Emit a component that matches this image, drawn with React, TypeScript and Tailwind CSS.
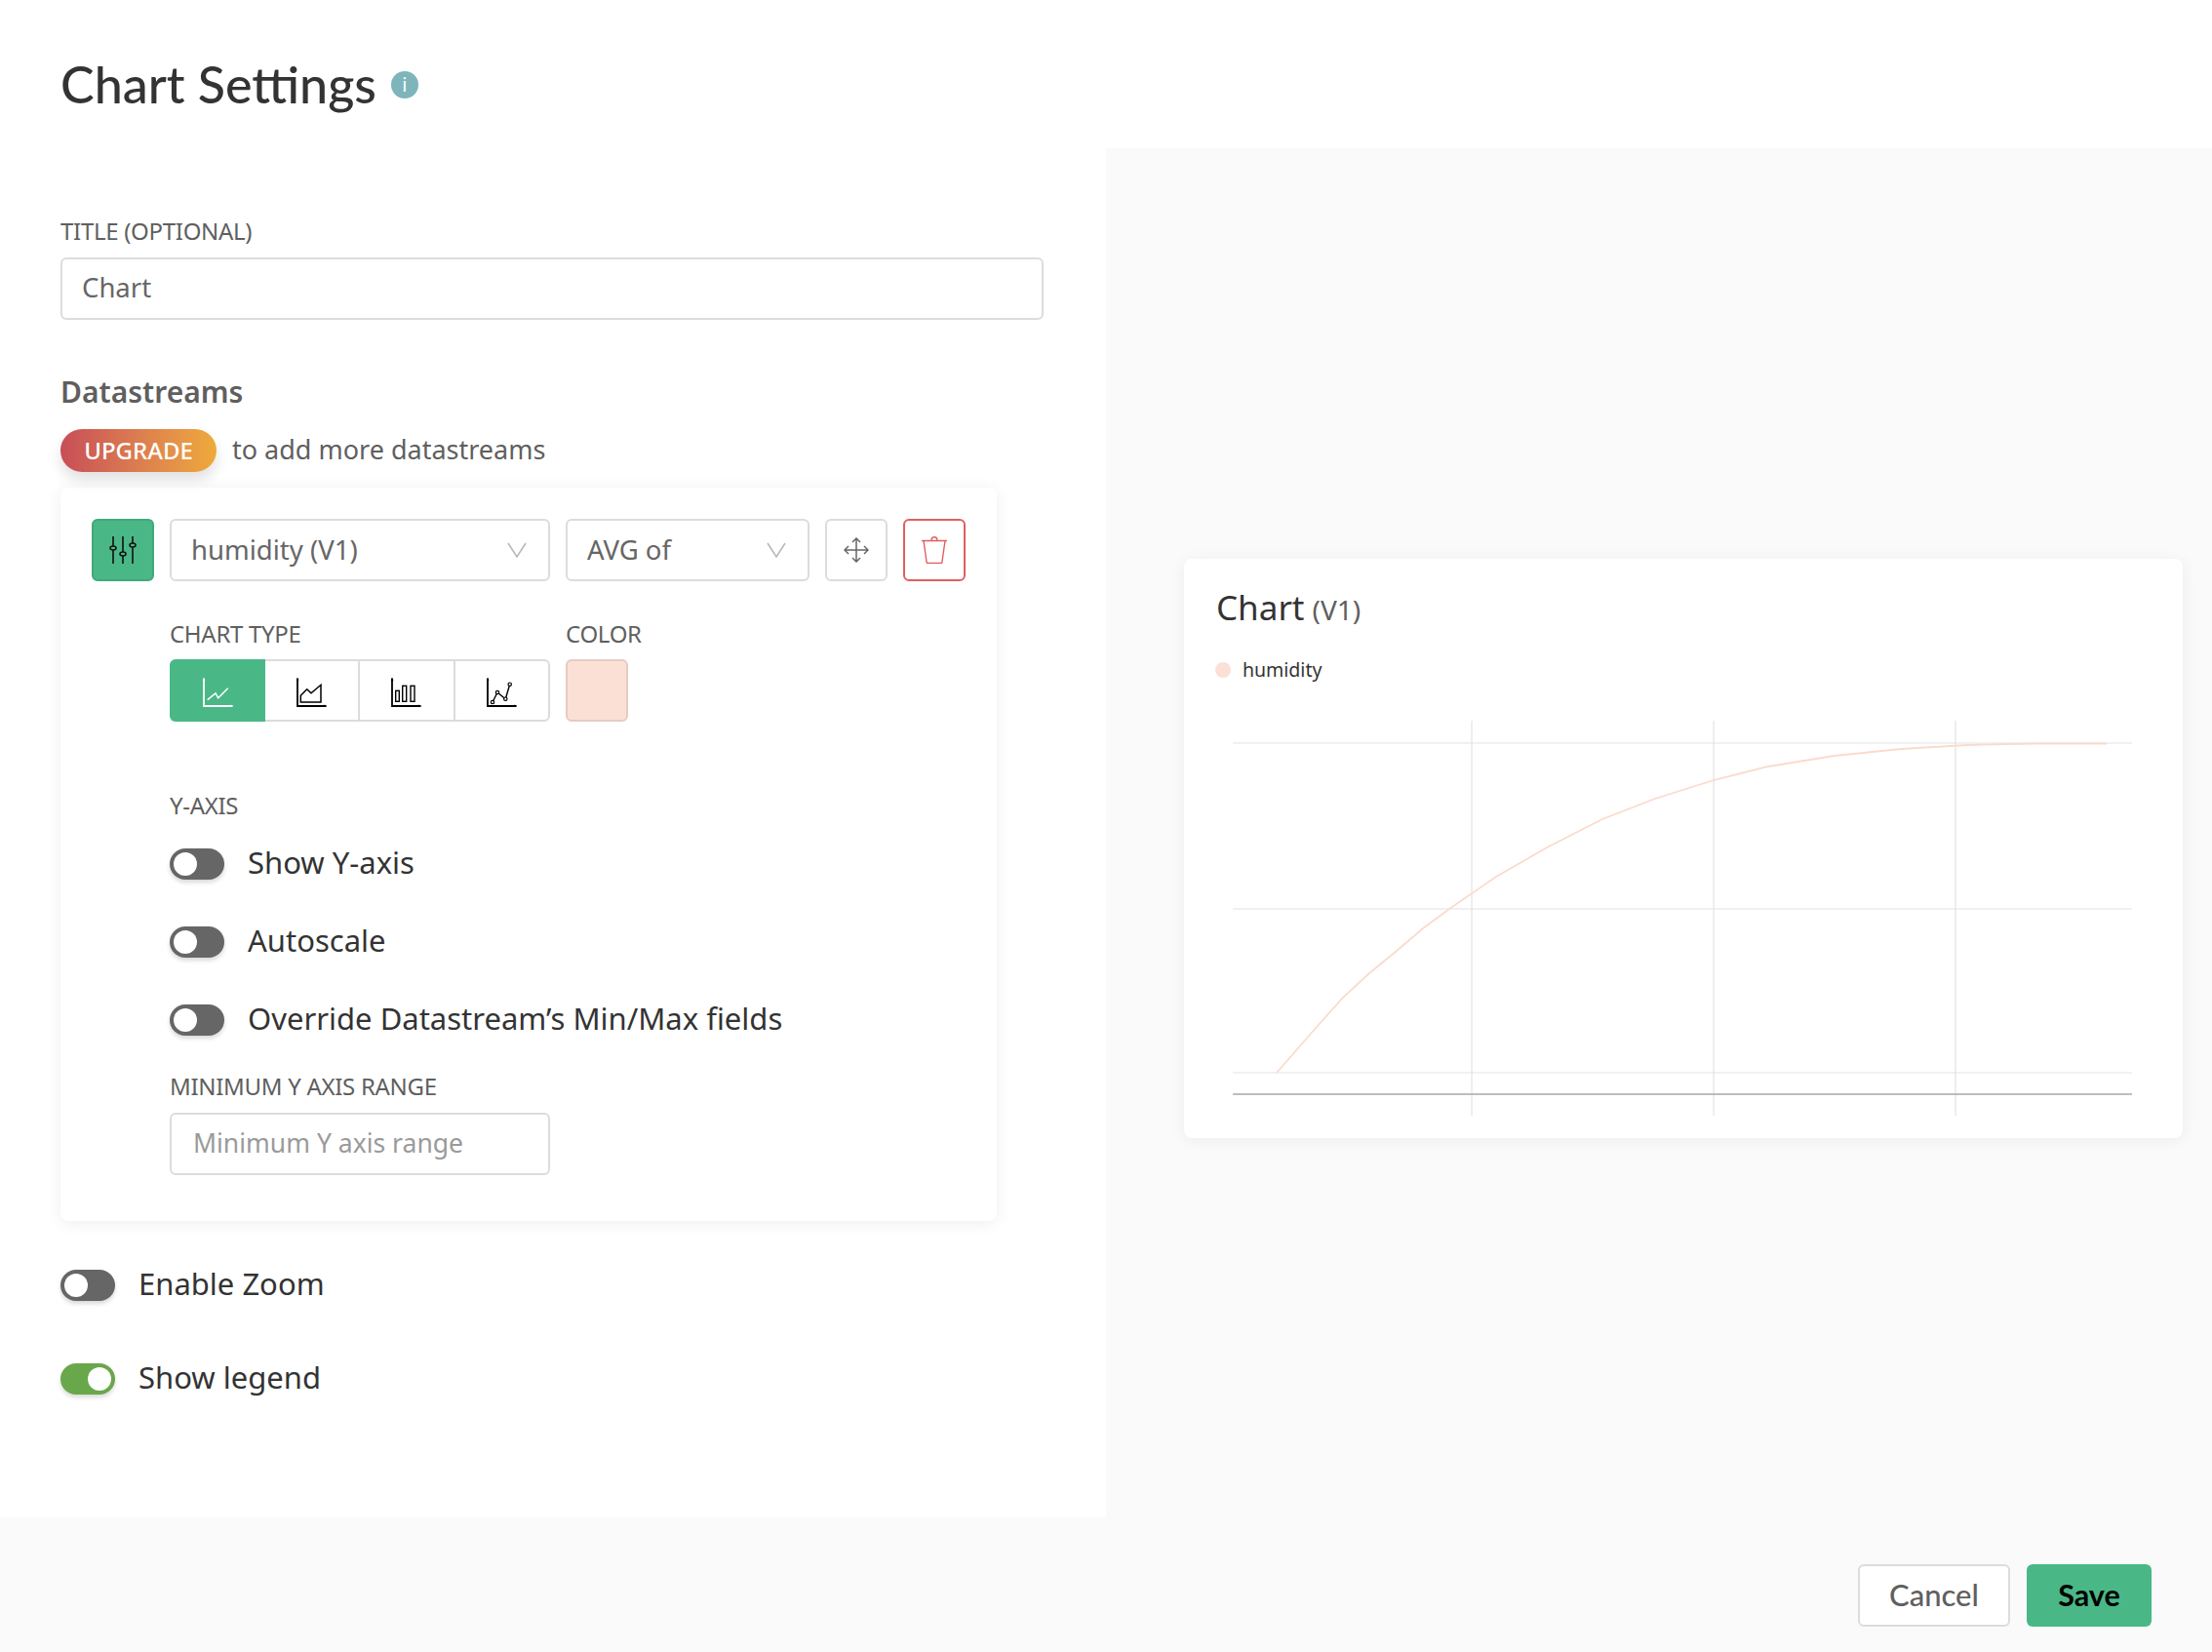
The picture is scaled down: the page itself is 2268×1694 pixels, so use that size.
const UI_FONT = "font-['Noto_Sans',sans-serif]";

function Toggle({ on = false }: { on?: boolean }) {
  return (
    <div className={`flex h-[32px] w-[56px] shrink-0 items-center rounded-full px-[4px] shadow-[0_3px_4px_rgba(0,0,0,0.15)] ${on ? "justify-end bg-[#69a74b]" : "justify-start bg-[#666666]"}`}>
      <div className="h-[24px] w-[24px] rounded-full bg-white" />
    </div>
  );
}

function ToggleRow({ label, on = false, className = "" }: { label: string; on?: boolean; className?: string }) {
  return (
    <div className={`flex h-[32px] items-center gap-[24px] ${className}`}>
      <Toggle on={on} />
      <span className="pb-[3px] text-[31px] leading-none text-[#333333]">{label}</span>
    </div>
  );
}

function Label({ children, className = "" }: { children: string; className?: string }) {
  return <div className={`pt-[1px] pb-[1px] text-[24px] leading-[28px] tracking-[-0.3px] text-[#5f5f5f] ${className}`}>{children}</div>;
}

function Chevron() {
  return (
    <svg width="20" height="16" viewBox="0 0 20 16" fill="none" stroke="#b9b9b9" strokeWidth="1.6">
      <path d="M1 1l9 14 9-14" />
    </svg>
  );
}

function Select({ text, className }: { text: string; className: string }) {
  return (
    <div className={`flex h-[64px] items-center justify-between rounded-[6px] border-2 border-[#dcdcdc] bg-white pl-[20px] pr-[22px] ${className}`}>
      <span className="pb-[1px] text-[27.5px] leading-none text-[#666666]">{text}</span>
      <Chevron />
    </div>
  );
}

function SlidersIcon() {
  return (
    <svg width="28" height="28" viewBox="0 0 28 28" fill="none" stroke="#111" strokeWidth="1.6">
      <path d="M4 0v10M4 14v14M14 0v16M14 20v8M24 0v7M24 11v17" />
      <ellipse cx="4" cy="12" rx="3" ry="2" />
      <ellipse cx="14" cy="18" rx="3" ry="2" />
      <ellipse cx="24" cy="9" rx="3" ry="2" />
    </svg>
  );
}

function MoveIcon() {
  return (
    <svg width="26" height="26" viewBox="0 0 26 26" fill="none" stroke="#666666" strokeWidth="1.5">
      <path d="M13 1v24M1 13h24M9 5l4-4 4 4M9 21l4 4 4-4M5 9l-4 4 4 4M21 9l4 4-4 4" />
    </svg>
  );
}

function TrashIcon() {
  return (
    <svg width="26" height="28" viewBox="0 0 26 28" fill="none" stroke="#e05f60" strokeWidth="1.4">
      <path d="M0 4.500h26M2 4.500l3 21.500a1.500 1.500 0 0 0 1.500 1.500h13a1.500 1.500 0 0 0 1.500-1.500l3-21.500M10 4.500c0-5 6-5 6 0" />
    </svg>
  );
}

function Axes({ color }: { color: string }) {
  return (
    <>
      <path d="M1 1v28h29" stroke={color} strokeWidth="1.8" fill="none" />
      <path d="M0 3L1 0l1 3zM28 28l3 1-3 1z" fill={color} stroke={color} strokeWidth="0.6" />
    </>
  );
}

function LineChartIcon() {
  return (
    <svg width="31" height="30" viewBox="0 0 31 30" fill="none" className="mt-[3px]">
      <Axes color="#ffffff" />
      <path d="M4.700 22.700L13 16l2.700 4.700L25.700 10.700" stroke="#ffffff" strokeWidth="1.500" />
    </svg>
  );
}

function AreaChartIcon() {
  return (
    <svg width="31" height="30" viewBox="0 0 31 30" fill="none" className="mt-[3px]">
      <Axes color="#000000" />
      <path d="M4.300 25v-6.700L10.700 11.700 15 15.700 25 7.300V25z" stroke="#000000" strokeWidth="1.500" />
    </svg>
  );
}

function BarChartIcon() {
  return (
    <svg width="31" height="30" viewBox="0 0 31 30" fill="none" stroke="#000000" className="mt-[3px]">
      <Axes color="#000000" />
      <rect x="4.700" y="13.300" width="3.600" height="11" strokeWidth="1.400" />
      <rect x="11.700" y="8.300" width="4" height="16" strokeWidth="1.400" />
      <rect x="20" y="8.300" width="4" height="16" strokeWidth="1.400" />
    </svg>
  );
}

function DotChartIcon() {
  return (
    <svg width="31" height="30" viewBox="0 0 31 30" fill="none" stroke="#000000" className="mt-[3px]">
      <Axes color="#000000" />
      <path d="M6 25l5-10 8.300 6.700 4.400-15" strokeWidth="1.400" />
      <circle cx="6" cy="25" r="1.700" fill="#fff" strokeWidth="1.200" />
      <circle cx="11" cy="15" r="1.700" fill="#fff" strokeWidth="1.200" />
      <circle cx="19.300" cy="21.700" r="1.700" fill="#fff" strokeWidth="1.200" />
      <circle cx="23.700" cy="6.700" r="1.700" fill="#fff" strokeWidth="1.200" />
    </svg>
  );
}

function ChartPlot() {
  return (
    <svg width="922" height="405" viewBox="0 0 922 405" fill="none" className="mt-[38px] ml-[50px]">
      <path d="M0 23h922M0 193h922M0 361h922" stroke="#ededed" strokeWidth="1.500" />
      <path d="M245 0v405M493 0v405M741 0v405" stroke="#dedede" strokeWidth="1" />
      <path d="M0 383h922" stroke="#a8a8a8" strokeWidth="1.500" />
      <path
        d="M45 361L79 322L113 284L140 259L168 236L195 213L222 193L270 160L324 129L379 101L433 80L493 61L549 47L617 36L685 29L753 25L822 23.500L896 23.500"
        stroke="#fbdacd"
        strokeWidth="1.800"
      />
    </svg>
  );
}

export default function App() {
  return (
    <div className={`flex h-[1694px] w-[2268px] flex-col overflow-hidden bg-[#fafafa] ${UI_FONT}`}>
      <div className="flex h-[1556px] shrink-0">
        {/* Settings form */}
        <div className="w-[1134px] shrink-0 bg-white pl-[62px]">
          <div className="flex items-center gap-[15px] pt-[56px]">
            <h1 className="font-['Lato',sans-serif] text-[52px] font-medium leading-[60px] text-[#333333]">Chart Settings</h1>
            <div className="mt-[2px] flex h-[28px] w-[28px] items-center justify-center rounded-full bg-[#7db5bb] text-[20px] leading-none text-white">i</div>
          </div>

          <Label className="mt-[106px]">TITLE (OPTIONAL)</Label>
          <div className="mt-[12px] flex h-[64px] w-[1008px] items-center rounded-[6px] border-2 border-[#dcdcdc] pb-[2px] pl-[20px] text-[27.5px] leading-none text-[#666666]">Chart</div>

          <h2 className="mt-[54px] text-[30px] font-semibold leading-[40px] text-[#5f5f5f]">Datastreams</h2>
          <div className="mt-[18px] flex items-center gap-[16px]">
            <div className="flex h-[44px] w-[160px] items-center justify-center rounded-full bg-gradient-to-r from-[#c74d57] to-[#eeaa3a] pb-[1px] text-[24px] font-medium leading-none text-white shadow-[0_8px_14px_rgba(0,0,0,0.12)]">UPGRADE</div>
            <span className="pb-[3px] text-[27px] leading-none text-[#5f5f5f]">to add more datastreams</span>
          </div>

          <div className="mt-[16px] h-[752px] w-[960px] rounded-[8px] bg-white pl-[32px] pt-[32px] shadow-[0_2px_16px_rgba(0,0,0,0.07)]">
            <div className="flex items-center">
              <div className="flex h-[64px] w-[64px] items-center justify-center rounded-[6px] border-2 border-[#41a87a] bg-[#4ab886]"><SlidersIcon /></div>
              <Select text="humidity (V1)" className="ml-[16px] w-[390px]" />
              <Select text="AVG of" className="ml-[16px] w-[250px]" />
              <div className="ml-[16px] flex h-[64px] w-[64px] items-center justify-center rounded-[6px] border-2 border-[#dcdcdc]"><MoveIcon /></div>
              <div className="ml-[16px] flex h-[64px] w-[64px] items-center justify-center rounded-[6px] border-2 border-[#e05f60]"><TrashIcon /></div>
            </div>

            <div className="ml-[80px]">
              <div className="mt-[39px] flex">
                <div className="w-[406px]">
                  <Label>CHART TYPE</Label>
                  <div className="mt-[11px] flex h-[64px] w-[390px]">
                    <div className="flex w-[98px] items-center justify-center rounded-l-[6px] bg-[#4ab886]"><LineChartIcon /></div>
                    <div className="flex flex-1 items-center justify-center border-y-2 border-r-2 border-[#dcdcdc]"><AreaChartIcon /></div>
                    <div className="flex flex-1 items-center justify-center border-y-2 border-r-2 border-[#dcdcdc]"><BarChartIcon /></div>
                    <div className="flex flex-1 items-center justify-center rounded-r-[6px] border-y-2 border-r-2 border-[#dcdcdc]"><DotChartIcon /></div>
                  </div>
                </div>
                <div>
                  <Label>COLOR</Label>
                  <div className="mt-[11px] h-[64px] w-[64px] rounded-[6px] border-2 border-[#e6cbc2] bg-[#fbe0d6]" />
                </div>
              </div>

              <Label className="mt-[71px]">Y-AXIS</Label>
              <ToggleRow label="Show Y-axis" className="mt-[29px]" />
              <ToggleRow label="Autoscale" className="mt-[48px]" />
              <ToggleRow label="Override Datastream’s Min/Max fields" className="mt-[48px]" />
              <Label className="mt-[37px]">MINIMUM Y AXIS RANGE</Label>
              <div className="mt-[12px] flex h-[64px] w-[390px] items-center rounded-[6px] border-2 border-[#dcdcdc] pb-[1px] pl-[22px] text-[26.5px] leading-none text-[#9a9a9a]">Minimum Y axis range</div>
            </div>
          </div>

          <ToggleRow label="Enable Zoom" className="mt-[50px]" />
          <ToggleRow label="Show legend" on className="mt-[64px]" />
        </div>

        {/* Preview */}
        <div className="flex flex-1 flex-col">
          <div className="h-[152px] shrink-0 bg-white" />
          <div className="pl-[80px] pt-[421px]">
            <div className="h-[594px] w-[1024px] rounded-[8px] bg-white pt-[28px] shadow-[0_2px_16px_rgba(0,0,0,0.06)]">
              <div className="flex items-baseline gap-[8px] pl-[33px]">
                <span className="text-[35px] leading-[44px] text-[#333333]">Chart</span>
                <span className="text-[28px] leading-[44px] text-[#5f5f5f]">(V1)</span>
              </div>
              <div className="mt-[26px] flex h-[28px] items-center pl-[32px]">
                <div className="h-[16px] w-[16px] rounded-full bg-[#fbe0d6]" />
                <span className="ml-[12px] text-[19.5px] leading-none text-[#333333]">humidity</span>
              </div>
              <ChartPlot />
            </div>
          </div>
        </div>
      </div>

      {/* Footer */}
      <div className="flex justify-end gap-[17px] pr-[62px] pt-[48px] font-['Lato',sans-serif]">
        <div className="flex h-[64px] w-[156px] items-center justify-center rounded-[6px] border-2 border-[#dcdcdc] bg-white pb-[2px] text-[31px] font-medium leading-none text-[#5f5f5f]">Cancel</div>
        <div className="flex h-[64px] w-[128px] items-center justify-center rounded-[6px] bg-[#4ab886] pb-[2px] text-[30.5px] font-bold leading-none text-[#000000]">Save</div>
      </div>
    </div>
  );
}
